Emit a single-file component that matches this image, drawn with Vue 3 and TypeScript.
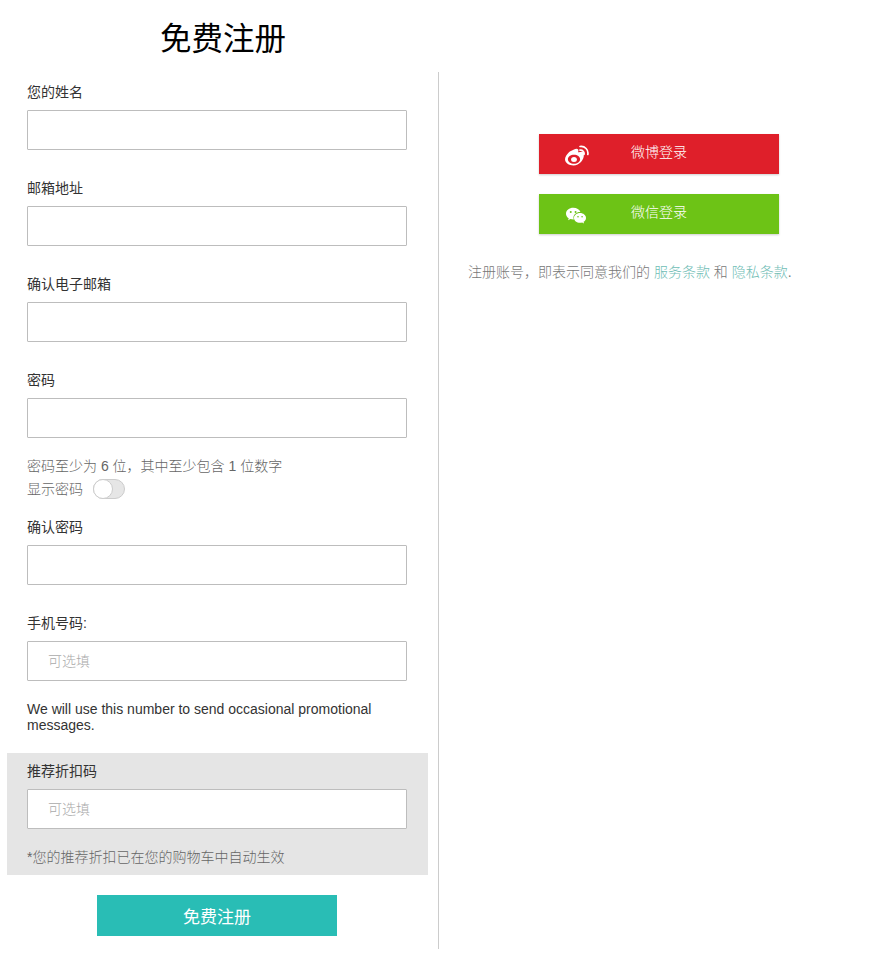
<script setup lang="ts">
interface Field {
  label: string;
  placeholder?: string;
}
const topFields: Field[] = [
  { label: '您的姓名' },
  { label: '邮箱地址' },
  { label: '确认电子邮箱' },
  { label: '密码' },
];
</script>

<template>
  <div class="page">
    <h1 class="title">免费注册</h1>
    <div class="columns">
      <form class="left" @submit.prevent>
        <div v-for="f in topFields" :key="f.label" class="field">
          <label class="label">{{ f.label }}</label>
          <input class="input" type="text" />
        </div>
        <div class="hints">
          <div class="hint-line">密码至少为 6 位，其中至少包含 1 位数字</div>
          <div class="hint-line show">
            <span>显示密码</span>
            <span class="toggle"><span class="knob"></span></span>
          </div>
        </div>
        <div class="field">
          <label class="label">确认密码</label>
          <input class="input" type="text" />
        </div>
        <div class="field phone">
          <label class="label">手机号码:</label>
          <input class="input" type="text" placeholder="可选填" />
          <p class="promo">We will use this number to send occasional promotional messages.</p>
        </div>
        <div class="referral">
          <label class="label">推荐折扣码</label>
          <input class="input" type="text" placeholder="可选填" />
          <p class="note">*您的推荐折扣已在您的购物车中自动生效</p>
        </div>
        <button class="submit" type="submit">免费注册</button>
      </form>
      <div class="right">
        <a class="social weibo">
          <svg class="icon" viewBox="0 0 25 22" width="25" height="22">
            <path fill="#fff" fill-rule="evenodd" d="M9.500 4.800c2-1.100 3.900-1.300 4.600-.4.500.6.400 1.500 0 2.500-.2.500.3.500.7.400 2.400-.9 4.400-.8 5.100.4.400.7.300 1.500-.1 2.300.4 4.600-4.400 10.400-10.300 10.400C5 20.400 1 17.800 1 14.200c0-2.300 2-5.200 4.200-7.200 1.500-1.300 3-1.400 4.300-2.200zM10 9.700c-3.400 0-6.100 2-6.100 4.500s2.700 4.500 6.100 4.500 6.100-2 6.100-4.500-2.700-4.500-6.100-4.500z"/>
            <ellipse cx="10" cy="14.500" rx="2.900" ry="2.500" fill="#fff"/>
            <path fill="none" stroke="#fff" stroke-width="1.700" stroke-linecap="round" d="M16 5.200c2.600-.4 4.500 1.700 4 4.200M16 1.500c4.900-.7 8.700 3.400 7.800 8"/>
          </svg>
          <span class="social-text">微博登录</span>
        </a>
        <a class="social wechat">
          <svg class="icon wechat-icon" viewBox="0 0 24 22" width="22" height="20">
            <path fill="#fff" d="M9 2C4.600 2 1 4.900 1 8.500c0 2 1.100 3.800 3 5l-.7 2.300 2.600-1.400c1 .3 2 .4 3.100.4h.6c-.3-.7-.4-1.400-.4-2.100 0-3.500 3.200-6.200 7.200-6.200h.5C15.900 3.900 12.800 2 9 2z"/>
            <path fill="#fff" d="M16.400 7.800c-3.600 0-6.600 2.400-6.600 5.300s3 5.300 6.600 5.300c.8 0 1.600-.1 2.300-.3l2.200 1.200-.6-1.900c1.600-1 2.700-2.500 2.700-4.300 0-2.900-3-5.300-6.600-5.300z"/>
            <circle cx="6.200" cy="6.500" r="1.100" fill="#6dc316"/>
            <circle cx="11.500" cy="6.500" r="1.100" fill="#6dc316"/>
            <circle cx="14.200" cy="11.800" r=".9" fill="#6dc316"/>
            <circle cx="18.700" cy="11.800" r=".9" fill="#6dc316"/>
          </svg>
          <span class="social-text">微信登录</span>
        </a>
        <p class="terms">注册账号，即表示同意我们的 <a class="link">服务条款</a> 和 <a class="link">隐私条款</a>.</p>
      </div>
    </div>
  </div>
</template>

<style scoped>
.page {
  width: 877px;
  height: 965px;
  background: #fff;
  font-family: "Liberation Sans", "Noto Sans CJK SC", sans-serif;
  font-size: 14px;
  color: #333;
  overflow: hidden;
}
.title {
  margin: 0;
  width: 446px;
  height: 72px;
  line-height: 78px;
  text-align: center;
  font-size: 31.5px;
  font-weight: 400;
  color: #000;
}
.columns {
  display: flex;
  align-items: flex-start;
}
.left {
  width: 432px;
  height: 877px;
  margin-left: 7px;
  padding-top: 10px;
  padding-right: 10px;
  box-sizing: border-box;
  border-right: 1px solid #ccc;
}
.field {
  padding: 0 21px 28px 20px;
}
.label {
  display: block;
  height: 20px;
  line-height: 20px;
  margin-bottom: 8px;
  font-weight: 400;
}
.input {
  display: block;
  width: 100%;
  height: 40px;
  box-sizing: border-box;
  border: 1px solid #bdbdbd;
  border-radius: 1px;
  padding: 0 20px;
  background: #fff;
  font: inherit;
  font-weight: 300;
  outline: none;
}
.input::placeholder {
  color: #aaa;
}
.hints {
  margin-top: -11px;
  padding: 0 20px 17px;
  color: #666;
  font-weight: 300;
}
.hint-line {
  height: 22px;
  line-height: 22px;
}
.show {
  display: flex;
  align-items: center;
  gap: 10px;
  margin-top: 1px;
}
.toggle {
  display: block;
  position: relative;
  width: 32px;
  height: 20px;
  box-sizing: border-box;
  border: 1px solid #ccc;
  border-radius: 10px;
  background: #e6e6e6;
}
.knob {
  position: absolute;
  left: -1px;
  top: -1px;
  width: 20px;
  height: 20px;
  box-sizing: border-box;
  border: 1px solid #ccc;
  border-radius: 50%;
  background: #fff;
}
.phone {
  padding-bottom: 20px;
}
.promo {
  margin: 20px 0 0;
  line-height: 16px;
  color: #333;
}
.referral {
  height: 122px;
  box-sizing: border-box;
  padding: 8px 21px 0 20px;
  background: #e5e5e5;
}
.note {
  margin: 18px 0 0;
  line-height: 20px;
  color: #666;
  font-weight: 300;
}
.submit {
  display: block;
  width: 240px;
  height: 41px;
  margin: 20px 0 0 90px;
  border: 0;
  background: #29bdb5;
  color: #fff;
  font: inherit;
  font-size: 17px;
}
.right {
  flex: 1;
  padding-top: 62px;
}
.social {
  display: flex;
  position: relative;
  align-items: center;
  justify-content: center;
  width: 240px;
  height: 40px;
  margin-left: 100px;
  margin-bottom: 20px;
  color: #fff;
  box-shadow: 0 1px 2px rgba(0, 0, 0, 0.2);
}
.weibo {
  background: #df1f2a;
}
.wechat {
  background: #6dc316;
}
.icon {
  position: absolute;
  left: 25px;
  top: 11px;
}
.wechat-icon {
  left: 26px;
  top: 12px;
}
.social-text {
  margin-bottom: 6px;
  font-weight: 300;
}
.terms {
  margin: 28px 0 0 29px;
  line-height: 20px;
  color: #777;
  font-weight: 300;
  white-space: nowrap;
}
.link {
  color: #6fbdb5;
}
</style>
